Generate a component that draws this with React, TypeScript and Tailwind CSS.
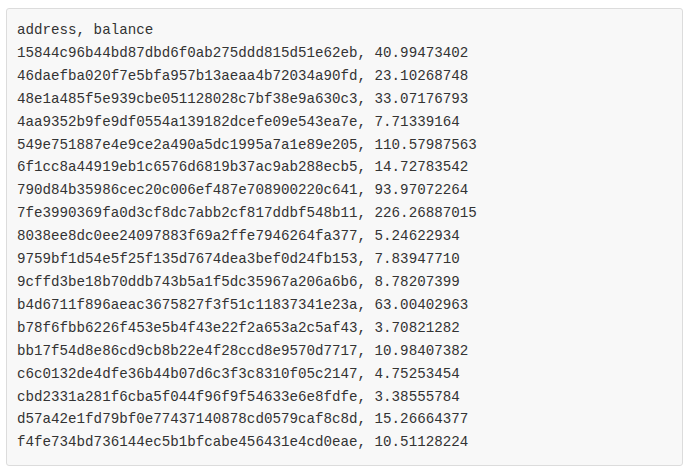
const rows = [
  "address, balance",
  "15844c96b44bd87dbd6f0ab275ddd815d51e62eb, 40.99473402",
  "46daefba020f7e5bfa957b13aeaa4b72034a90fd, 23.10268748",
  "48e1a485f5e939cbe051128028c7bf38e9a630c3, 33.07176793",
  "4aa9352b9fe9df0554a139182dcefe09e543ea7e, 7.71339164",
  "549e751887e4e9ce2a490a5dc1995a7a1e89e205, 110.57987563",
  "6f1cc8a44919eb1c6576d6819b37ac9ab288ecb5, 14.72783542",
  "790d84b35986cec20c006ef487e708900220c641, 93.97072264",
  "7fe3990369fa0d3cf8dc7abb2cf817ddbf548b11, 226.26887015",
  "8038ee8dc0ee24097883f69a2ffe7946264fa377, 5.24622934",
  "9759bf1d54e5f25f135d7674dea3bef0d24fb153, 7.83947710",
  "9cffd3be18b70ddb743b5a1f5dc35967a206a6b6, 8.78207399",
  "b4d6711f896aeac3675827f3f51c11837341e23a, 63.00402963",
  "b78f6fbb6226f453e5b4f43e22f2a653a2c5af43, 3.70821282",
  "bb17f54d8e86cd9cb8b22e4f28ccd8e9570d7717, 10.98407382",
  "c6c0132de4dfe36b44b07d6c3f3c8310f05c2147, 4.75253454",
  "cbd2331a281f6cba5f044f96f9f54633e6e8fdfe, 3.38555784",
  "d57a42e1fd79bf0e77437140878cd0579caf8c8d, 15.26664377",
  "f4fe734bd736144ec5b1bfcabe456431e4cd0eae, 10.51128224",
];

export default function App() {
  return (
    <div className="w-[690px] h-[471px] bg-white pt-[8px] pl-[6px]">
      <pre className="w-[677px] h-[458px] bg-[#f8f8f8] border border-[#dcdcdc] rounded-[3px] px-[10px] py-[10px] text-[#333333] text-[14.2px] leading-[22.9px] font-['Liberation_Mono',monospace] overflow-hidden">
        {rows.map((r) => (
          <div key={r}>{r}</div>
        ))}
      </pre>
    </div>
  );
}
